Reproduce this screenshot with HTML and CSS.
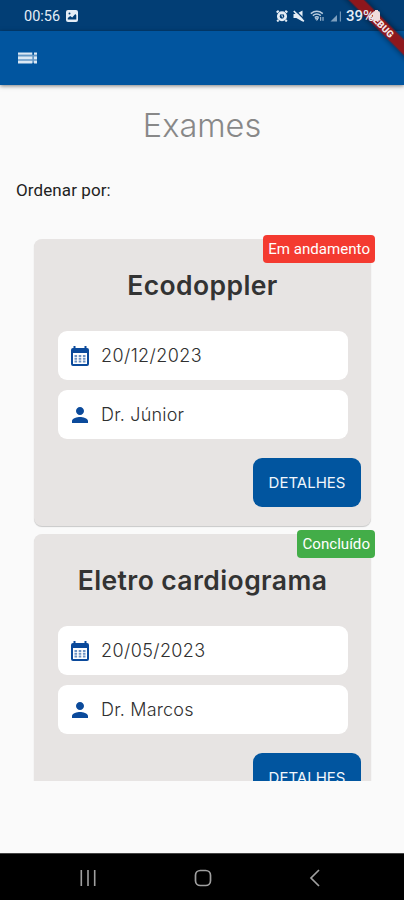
FILE: index.html
```html
<!DOCTYPE html>
<html lang="pt-BR">
<head>
  <meta charset="UTF-8">
  <meta name="viewport" content="width=device-width, initial-scale=1.0">
  <title>Exames</title>
  <link rel="stylesheet" href="styles.css">
</head>
<body>
  <svg width="0" height="0" class="symbols">
    <symbol id="calendar" viewBox="0 0 20 20">
      <path fill-rule="evenodd" d="M3.500 0h2v2h9V0h2v2H17q2 0 2 2v14q0 2-2 2H3q-2 0-2-2V4q0-2 2-2h.5zM3 7v11h14V7z"/>
      <path d="M4.500 9h2.600v2H4.500zM8.700 9h2.600v2H8.700zM12.900 9h2.600v2h-2.600zM4.500 11.800h2.600v2H4.500zM8.700 11.800h2.600v2H8.700zM12.900 11.800h2.600v2h-2.600zM4.500 14.600h2.600v2H4.500zM8.700 14.600h2.600v2H8.700zM12.900 14.600h2.600v2h-2.600z" opacity=".6"/>
    </symbol>
    <symbol id="person" viewBox="4 4 16 16">
      <path d="M12 12c2.210 0 4-1.790 4-4s-1.790-4-4-4-4 1.790-4 4 1.790 4 4 4zm0 2c-2.670 0-8 1.340-8 4v2h16v-2c0-2.660-5.330-4-8-4z"/>
    </symbol>
  </svg>

  <div class="screen">
    <div class="status-bar">
      <span class="clock">00:56</span>
      <svg class="picture" width="12" height="12" viewBox="0 0 12 12">
        <rect width="12" height="12" rx="2" fill="#e4edf6"/>
        <path d="M1.800 9.600V8l2.400-2 2 1.500L9.300 4l1 1.200v4.400z" fill="#023e75"/>
        <circle cx="3.500" cy="3.500" r="1" fill="#023e75"/>
      </svg>
      <div class="status-icons">
        <svg width="12" height="12" viewBox="0 0 12 12" fill="none" stroke="#e4edf6">
          <circle cx="6" cy="6.300" r="3.700" stroke-width="2.700"/>
          <path d="M.7 2.600l2-1.800M11.300 2.600l-2-1.800M2.500 10l-1.300 1.500M9.500 10l1.300 1.500" stroke-width="2"/>
          <path d="M6 4.300v2.200l1.300.8"/>
        </svg>
        <svg width="12" height="12" viewBox="0 0 12 12">
          <path d="M.5 4h2.800L9.500.4v11L3.300 8H.5z" fill="#e4edf6"/>
          <path d="M2.300.500L12 10" stroke="#023e75" stroke-width="1.300"/>
          <path d="M.8 1L10.800 11.300" stroke="#e4edf6" stroke-width="1.700"/>
        </svg>
        <svg class="wifi" width="15" height="12" viewBox="0 0 15 12" fill="none" stroke="#b9cde0" stroke-width="1.500">
          <path d="M.8 3.600q6-4.600 12 0M2.800 5.600q4-3 8 0M4.700 7.500q2.100-1.500 4.200 0"/>
          <path d="M5.300 8.400h3l-1.500 2zM10.700 7v3.800M13 7v3.800" stroke-width="1"/>
        </svg>
        <svg width="12" height="12" viewBox="0 0 12 12" fill="#9db8d1">
          <path d="M.5 11.500L7 5v6.500z" opacity=".8"/>
          <path d="M9.800 1.500H11v10H9.800z" opacity=".7"/>
        </svg>
        <span class="battery">39%</span>
        <svg width="8" height="12" viewBox="0 0 8 12">
          <rect x="0" y="1" width="7" height="10" rx="2" fill="#f0dcdc"/>
          <rect x="2" y="0" width="3" height="2" fill="#f0dcdc"/>
        </svg>
      </div>
    </div>

    <div class="app-bar">
      <svg width="20" height="12" viewBox="0 0 20 12" fill="#dbe8f4">
        <path d="M0 .5h14.300v2.300H0zM0 4.500h14.300v2.700H0zM0 8.700h14.300v2.800H0zM16 .5h3v2.300h-3zM16 4.500h3v2.700h-3zM16 8.700h3v2.800h-3z"/>
        <path d="M0 2.800h19v8H0z" opacity=".45"/>
      </svg>
    </div>

    <svg class="debug-banner" width="64" height="64" viewBox="0 0 64 64">
      <g transform="translate(40 23.500) rotate(45)">
        <rect class="ribbon" x="-50" y="-5.500" width="100" height="11"/>
        <text x="2" y="3.500" text-anchor="middle" textLength="31">DEBUG</text>
      </g>
    </svg>

    <main class="content">
      <h1>Exames</h1>
      <p class="order">Ordenar por:</p>

      <div class="exam-list">
        <div class="card">
          <span class="badge pending">Em andamento</span>
          <h2>Ecodoppler</h2>
          <div class="info"><svg class="cal"><use href="#calendar"/></svg><span class="date">20/12/2023</span></div>
          <div class="info"><svg class="per"><use href="#person"/></svg><span>Dr. Júnior</span></div>
          <button>DETALHES</button>
        </div>
        <div class="card">
          <span class="badge done">Concluído</span>
          <h2>Eletro cardiograma</h2>
          <div class="info"><svg class="cal"><use href="#calendar"/></svg><span class="date">20/05/2023</span></div>
          <div class="info"><svg class="per"><use href="#person"/></svg><span>Dr. Marcos</span></div>
          <button>DETALHES</button>
        </div>
      </div>
    </main>

    <div class="nav-bar">
      <svg width="16" height="16" viewBox="0 0 16 16" stroke="#a0a0a0" stroke-width="1.600">
        <path d="M1.300 0v16M8 0v16M14.700 0v16"/>
      </svg>
      <svg width="18" height="18" viewBox="0 0 18 18" fill="none" stroke="#a0a0a0" stroke-width="1.700">
        <rect x="1.500" y="1.500" width="15" height="15" rx="4.800"/>
      </svg>
      <svg width="12" height="18" viewBox="0 0 12 18" fill="none" stroke="#a0a0a0" stroke-width="1.700">
        <path d="M10 1L2 9l8 8"/>
      </svg>
    </div>
  </div>
</body>
</html>
```
FILE: styles.css
```css
body {
  margin: 0;
  font-family: Roboto, sans-serif;
  background-color: #fafafa;
}
.symbols {
  position: absolute;
}
.screen {
  position: relative;
  display: flex;
  flex-direction: column;
  width: 404px;
  height: 900px;
  overflow: hidden;
}
.status-bar {
  display: flex;
  align-items: center;
  box-sizing: border-box;
  height: 31px;
  padding: 1px 23px 0 24px;
  background-color: #023e75;
  color: #e4edf6;
  font-size: 14.5px;
}
.picture {
  margin-left: 6px;
}
.status-icons {
  position: relative;
  z-index: 1;
  display: flex;
  align-items: center;
  gap: 5px;
  margin-left: auto;
}
.battery {
  margin: 0 -6px 0 -1px;
  font-size: 15px;
  font-weight: 500;
}
.app-bar {
  display: flex;
  align-items: center;
  box-sizing: border-box;
  height: 54px;
  padding: 0 18px;
  background-color: #01559f;
  box-shadow: 0 1px 4px rgba(0, 0, 0, 0.5);
}
.debug-banner {
  position: absolute;
  top: 0;
  right: 0;
}
.ribbon {
  fill: rgba(150, 22, 26, 0.95);
  filter: drop-shadow(0 0 3px rgba(0, 0, 0, 0.6));
}
.debug-banner text {
  fill: #f5e8e8;
  font-size: 9.5px;
  font-weight: 900;
}
.content {
  flex: 1;
  min-height: 0;
}
h1 {
  margin: 21px 0 0;
  color: #888;
  font-family: Inter, sans-serif;
  font-size: 32.5px;
  font-weight: 300;
  line-height: 40px;
  text-align: center;
}
.order {
  margin: 34px 0 0 16px;
  color: #222;
  font-size: 17px;
  line-height: 20px;
  letter-spacing: 0.1px;
}
.exam-list {
  display: flex;
  flex-direction: column;
  gap: 8px;
  height: 550px;
  margin-top: 31px;
  padding: 8px 29px 0 34px;
  box-sizing: border-box;
  overflow: hidden;
}
.card {
  position: relative;
  flex-shrink: 0;
  box-sizing: border-box;
  width: 337px;
  height: 287px;
  padding: 30px 10px 0 24px;
  border-radius: 8px;
  background-color: #e7e4e3;
  box-shadow: 0 1px 1px rgba(0, 0, 0, 0.2);
}
.badge {
  position: absolute;
  top: -4px;
  right: -4px;
  padding: 0 5px;
  border-radius: 4px;
  color: #fff;
  font-size: 15.1px;
  line-height: 28px;
}
.pending {
  background-color: #f43a30;
}
.done {
  background-color: #43ad48;
}
h2 {
  margin: 0 14px 29px 0;
  color: #333;
  font-family: Inter, sans-serif;
  font-size: 26.5px;
  font-weight: 600;
  line-height: 33px;
  letter-spacing: 0.4px;
  text-align: center;
  white-space: nowrap;
}
.info {
  display: flex;
  align-items: center;
  box-sizing: border-box;
  width: 290px;
  height: 49px;
  margin-bottom: 10px;
  padding-left: 12px;
  border-radius: 9px;
  background-color: #fff;
  color: #303030;
  font-family: Inter, sans-serif;
  font-size: 18px;
  font-weight: 300;
  letter-spacing: 0.2px;
}
.date {
  letter-spacing: 0.4px;
}
.info svg {
  width: 20px;
  height: 20px;
  margin-right: 11px;
  fill: #0b4a9b;
}
.info .per {
  width: 16px;
  height: 16px;
  margin: 0 13px 0 2px;
}
button {
  display: block;
  width: 108px;
  height: 49px;
  margin: 19px 0 0 auto;
  padding: 0;
  border: none;
  border-radius: 9px;
  background-color: #01559f;
  color: #f2f7fc;
  font-family: Inter, sans-serif;
  font-size: 15px;
}
.nav-bar {
  display: flex;
  align-items: center;
  box-sizing: border-box;
  height: 47px;
  padding: 1px 83px 0 80px;
  justify-content: space-between;
  border-top: 1px solid #444;
  background-color: #000;
}
```
